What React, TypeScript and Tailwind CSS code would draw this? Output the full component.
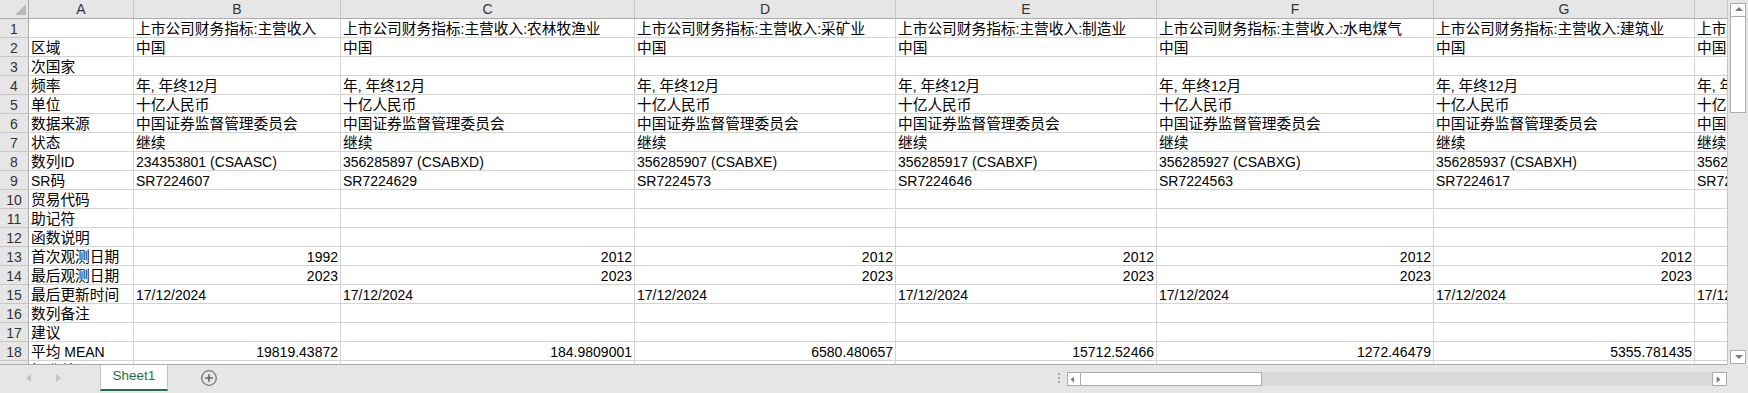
const CJK = /([\u3000-\u303f\u4e00-\u9fff\uff00-\uffef]+)/;

const cols = ['A', 'B', 'C', 'D', 'E', 'F', 'G', 'H'];
const widths = [105, 207, 294, 261, 261, 277, 261, 261];

const T = '上市公司财务指标:主营收入';
const rep = (s: string) => Array(7).fill(s);

const rows: string[][] = [
  ['', T, T + ':农林牧渔业', T + ':采矿业', T + ':制造业', T + ':水电煤气', T + ':建筑业', T + ':交通运输'],
  ['区域', ...rep('中国')],
  ['次国家'],
  ['频率', ...rep('年, 年终12月')],
  ['单位', ...rep('十亿人民币')],
  ['数据来源', ...rep('中国证券监督管理委员会')],
  ['状态', ...rep('继续')],
  ['数列ID', '234353801 (CSAASC)', '356285897 (CSABXD)', '356285907 (CSABXE)', '356285917 (CSABXF)', '356285927 (CSABXG)', '356285937 (CSABXH)', '356285947 (CSABXI)'],
  ['SR码', 'SR7224607', 'SR7224629', 'SR7224573', 'SR7224646', 'SR7224563', 'SR7224617', 'SR7224599'],
  ['贸易代码'],
  ['助记符'],
  ['函数说明'],
  ['首次观测日期', '1992', '2012', '2012', '2012', '2012', '2012', '2012'],
  ['最后观测日期', ...rep('2023')],
  ['最后更新时间', ...rep('17/12/2024')],
  ['数列备注'],
  ['建议'],
  ['平均 MEAN', '19819.43872', '184.9809001', '6580.480657', '15712.52466', '1272.46479', '5355.781435', '2870.112934'],
  ['标准差 STD'],
];

function Txt({ s }: { s: string }) {
  return (
    <>
      {s.split(CJK).map((p, i) =>
        i % 2 ? (
          <span key={i} className="text-[14.7px] leading-none font-['Noto_Sans_CJK_SC',sans-serif]">
            {p}
          </span>
        ) : (
          p
        )
      )}
    </>
  );
}

function Cell({ w, v }: { w: number; v?: string }) {
  const right = !!v && /^\d+(\.\d+)?$/.test(v);
  return (
    <div
      style={{ width: w }}
      className={`shrink-0 h-[19px] border-r border-b border-[#d4d4d4] bg-white pt-[2px] leading-[17px] text-[14px] text-black whitespace-nowrap overflow-hidden ${
        right ? 'text-right pr-[2px]' : 'pl-[2px]'
      }`}
    >
      {v ? <Txt s={v} /> : null}
    </div>
  );
}

function Arrow({ dir }: { dir: 'up' | 'down' | 'left' | 'right' }) {
  const pts = {
    up: '4,7 8,3 12,7',
    down: '4,4 8,8 12,4',
    left: '7,3 3,6.5 7,10',
    right: '4,3 8,6.5 4,10',
  }[dir];
  return (
    <svg width="14" height="12" viewBox="0 0 14 12" className="block">
      <polygon points={pts} fill="#7a7a7a" />
    </svg>
  );
}

export default function App() {
  return (
    <div className="w-[1748px] h-[393px] overflow-hidden bg-[#e6e6e6] font-['Liberation_Sans',Arial,sans-serif] flex flex-col">
      <div className="h-[365px] flex">
        {/* Grid */}
        <div className="w-[1727px] h-[365px] overflow-hidden border-b border-[#ababab] bg-white">
          <div className="flex h-[19px]">
            <div className="w-[29px] shrink-0 h-[19px] border-r border-b border-[#ababab] bg-[#e6e6e6] flex items-end justify-end">
              <svg width="26" height="18" viewBox="0 0 26 18" className="block">
                <polygon points="24,4 24,15 13,15" fill="#b8b8b8" />
              </svg>
            </div>
            {cols.map((c, i) => (
              <div
                key={c}
                style={{ width: widths[i] }}
                className="shrink-0 h-[19px] border-r border-b border-r-[#c6c6c6] border-b-[#ababab] bg-[#e6e6e6] text-center text-[14px] leading-[17px] pt-[1px] text-[#333]"
              >
                {c}
              </div>
            ))}
          </div>
          {rows.map((r, ri) => (
            <div key={ri} className="flex h-[19px]">
              <div className="w-[29px] shrink-0 h-[19px] border-r border-b border-r-[#ababab] border-b-[#c6c6c6] bg-[#e6e6e6] text-center text-[14px] leading-[17px] pt-[2px] text-[#333]">
                {ri + 1}
              </div>
              {widths.map((w, ci) => (
                <Cell key={ci} w={w} v={r[ci]} />
              ))}
            </div>
          ))}
        </div>

        {/* Vertical scrollbar */}
        <div className="w-[21px] h-[365px] border-l border-[#c6c6c6] bg-[#e6e6e6] flex flex-col items-center pt-[3px]">
          <div className="w-[16px] h-[14px] bg-white border border-[#ababab] flex items-center justify-center">
            <Arrow dir="up" />
          </div>
          <div className="w-[16px] h-[96px] bg-white border-x border-b border-[#ababab]" />
          <div className="flex-1" />
          <div className="w-[16px] h-[14px] bg-white border border-[#ababab] flex items-center justify-center mb-[1px]">
            <Arrow dir="down" />
          </div>
        </div>
      </div>

      {/* Sheet tabs bar */}
      <div className="h-[28px] flex items-start">
        <div className="w-[100px] h-[26px] flex items-center">
          <svg width="100" height="26" viewBox="0 0 100 26" className="block">
            <polygon points="31,9 26,13 31,17" fill="#c4c4c4" />
            <polygon points="56,9 61,13 56,17" fill="#c4c4c4" />
          </svg>
        </div>
        <div className="w-[68px] h-[26px] bg-white border-x border-[#c6c6c6] border-b-2 border-b-[#217346] flex justify-center pt-[2px]">
          <span className="text-[13.5px] leading-[17px] text-[#217346]">Sheet1</span>
        </div>
        <div className="w-[82px] h-[26px] flex items-center justify-center">
          <svg width="18" height="18" viewBox="0 0 18 18" className="block">
            <circle cx="9" cy="9" r="7.3" fill="none" stroke="#777" strokeWidth="1.3" />
            <path d="M9 5.2v7.6M5.2 9h7.6" stroke="#666" strokeWidth="1.6" />
          </svg>
        </div>
        <div className="flex-1" />
        <div className="w-[17px] h-[26px] flex flex-col items-center justify-center gap-[2px]">
          <div className="w-[2px] h-[2px] bg-[#a8a8a8]" />
          <div className="w-[2px] h-[2px] bg-[#a8a8a8]" />
          <div className="w-[2px] h-[2px] bg-[#a8a8a8]" />
        </div>
        <div className="w-[660px] h-[14px] mt-[7px] flex">
          <div className="w-[14px] h-[14px] bg-white border border-[#ababab] flex items-center justify-center">
            <Arrow dir="left" />
          </div>
          <div className="w-[181px] h-[14px] bg-white border-y border-r border-[#ababab]" />
          <div className="flex-1 h-[14px] bg-[#d9d9d9]" />
          <div className="w-[15px] h-[14px] bg-white border border-[#ababab] flex items-center justify-center">
            <Arrow dir="right" />
          </div>
        </div>
        <div className="w-[21px]" />
      </div>
    </div>
  );
}
